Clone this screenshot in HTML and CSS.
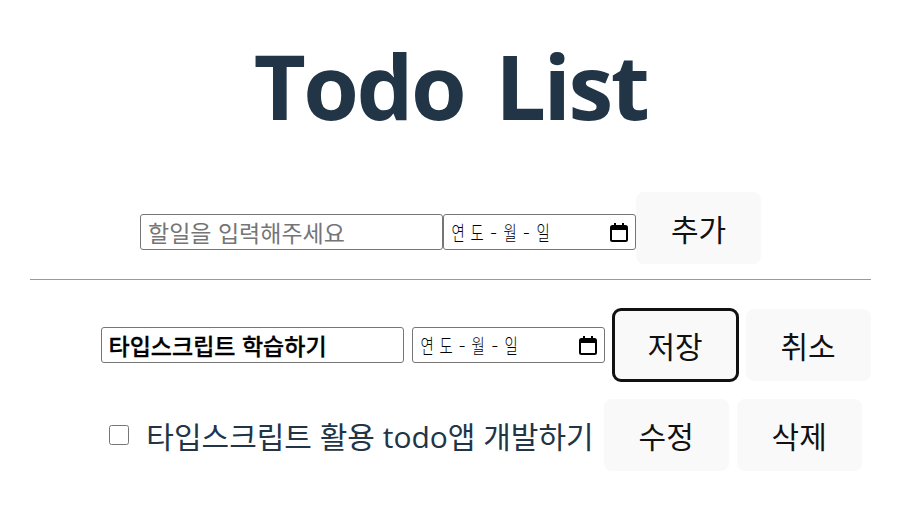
FILE: index.html
```html
<!DOCTYPE html>
<html lang="ko">
<head>
<meta charset="utf-8">
<title>Todo List</title>
<link rel="stylesheet" href="styles.css">
</head>
<body>
<div class="app">
  <h1 class="title">Todo List</h1>
  <div class="add-row">
    <input class="text-input" type="text" placeholder="할일을 입력해주세요">
    <div class="date-input">
      <span class="date-text"><span class="ch">연</span><span class="ch">도</span><span class="sep">-</span><span class="ch">월</span><span class="sep">-</span><span class="ch">일</span></span>
      <svg class="cal" width="18" height="20" viewBox="0 0 18 20"><rect x="1" y="4" width="16" height="15" rx="1.5" fill="none" stroke="#000" stroke-width="2"/><rect x="1" y="4" width="16" height="4" fill="#000"/><rect x="4" y="1" width="2" height="4" fill="#000"/><rect x="12" y="1" width="2" height="4" fill="#000"/></svg>
    </div>
    <button class="btn">추가</button>
  </div>
  <hr class="divider">
  <ul class="list">
    <li class="item edit">
      <input class="text-input value" type="text" value="타입스크립트 학습하기">
      <div class="date-input">
        <span class="date-text"><span class="ch">연</span><span class="ch">도</span><span class="sep">-</span><span class="ch">월</span><span class="sep">-</span><span class="ch">일</span></span>
        <svg class="cal" width="18" height="20" viewBox="0 0 18 20"><rect x="1" y="4" width="16" height="15" rx="1.5" fill="none" stroke="#000" stroke-width="2"/><rect x="1" y="4" width="16" height="4" fill="#000"/><rect x="4" y="1" width="2" height="4" fill="#000"/><rect x="12" y="1" width="2" height="4" fill="#000"/></svg>
      </div>
      <button class="btn focused">저장</button>
      <button class="btn">취소</button>
    </li>
    <li class="item view">
      <input class="check" type="checkbox">
      <span class="todo-text">타입스크립트 활용 todo앱 개발하기</span>
      <button class="btn">수정</button>
      <button class="btn">삭제</button>
    </li>
  </ul>
</div>
</body>
</html>
```
FILE: styles.css
```css
html, body {
  margin: 0;
  padding: 0;
  background: #ffffff;
}
body {
  font-family: "Open Sans", "Noto Sans CJK KR", sans-serif;
  color: #213547;
}
.app {
  width: 841px;
  margin-left: 30px;
}
.title {
  margin: 36px 0 0;
  font-size: 90px;
  line-height: 1.1;
  font-weight: 700;
  letter-spacing: -2.5px;
  word-spacing: 10px;
  text-align: center;
  color: #213547;
}
.add-row {
  display: flex;
  justify-content: center;
  align-items: flex-start;
  margin-top: 57px;
}
.add-row .text-input,
.add-row .date-input {
  margin-top: 22px;
}
.text-input {
  box-sizing: border-box;
  width: 303px;
  height: 36px;
  margin: 0;
  padding: 0 7px;
  border: 1px solid #767676;
  border-radius: 3px;
  font-family: "Noto Sans CJK KR", sans-serif;
  font-size: 23px;
  color: #000;
  background: #fff;
}
.text-input::placeholder {
  color: #757575;
}
.text-input.value {
  font-weight: 500;
  -webkit-text-stroke: 0.3px #000;
}
.date-input {
  box-sizing: border-box;
  width: 193px;
  height: 36px;
  border: 1px solid #767676;
  border-radius: 3px;
  display: flex;
  align-items: center;
  justify-content: space-between;
  padding: 0 7px 0 8px;
  background: #fff;
}
.date-text {
  display: flex;
  align-items: center;
  gap: 6px;
  font-family: "Noto Sans CJK KR", sans-serif;
  font-size: 20px;
  font-weight: 300;
  color: #000;
}
.date-text .ch {
  display: inline-block;
  transform: scaleX(0.72);
  margin: 0 -2.8px;
}
.date-text .sep {
  width: 8px;
  text-align: center;
}
.cal {
  display: block;
}
.btn {
  box-sizing: border-box;
  width: 125px;
  height: 72px;
  margin: 0;
  padding: 0;
  border: 1px solid transparent;
  border-radius: 8px;
  background: #f9f9f9;
  font-family: "Noto Sans CJK KR", sans-serif;
  font-size: 30px;
  color: #111;
  cursor: pointer;
}
.btn.focused {
  outline: 3px solid #111;
  outline-offset: -2px;
}
.divider {
  border: 0;
  border-top: 1px solid #9a9a9a;
  margin: 15px 0 0;
  height: 0;
}
.list {
  list-style: none;
  margin: 29px 0 0;
  padding: 0 0 0 70px;
}
.item {
  display: flex;
  justify-content: center;
  align-items: center;
  gap: 8px;
}
.item.view {
  margin-top: 18px;
}
.check {
  width: 20px;
  height: 20px;
  margin: 0 9px 0 0;
}
.todo-text {
  font-family: "Open Sans", "Noto Sans CJK KR", sans-serif;
  font-size: 30px;
  color: #213547;
  margin-right: 2px;
}
```
